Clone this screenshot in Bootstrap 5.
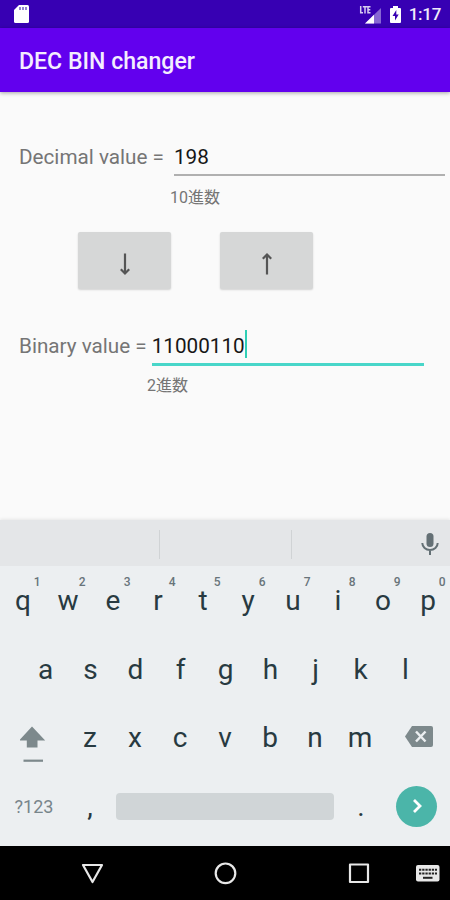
<!DOCTYPE html>
<html lang="en">
<head>
<meta charset="utf-8">
<meta name="viewport" content="width=device-width, initial-scale=1">
<title>DEC BIN changer</title>
<link href="https://cdn.jsdelivr.net/npm/bootstrap@5.3.0/dist/css/bootstrap.min.css" rel="stylesheet">
<style>
body{width:450px;height:900px;overflow:hidden;background:#fafafa;font-family:Roboto,"Noto Sans CJK JP",sans-serif;color:#757575}
svg{display:block;flex:none}
.status{height:28px;background:#3700b3;padding:0 9px 0 14px;color:#f0ebfa;font-size:17px;font-weight:500;line-height:30px;letter-spacing:-.3px}
.appbar{height:64px;background:#6200ee;padding-left:19px;font-size:23.1px;font-weight:500;line-height:67px;color:#f4edfe;box-shadow:0 1px 4px rgba(0,0,0,.35)}
.main{height:428px;padding-top:48px}
.field-row{height:36px;padding-left:19px;font-size:20.7px;line-height:35px;white-space:pre}
.entry{color:#161616;height:36px}
.dec{width:271px;margin-left:10px;border-bottom:2px solid #b0b0b0}
.bin{width:272px;margin-left:5px;height:37px;border-bottom:3px solid #48d6c9}
.caret{width:2px;height:28px;background:#2fcfb6;margin-top:1px}
.hint{font-size:16px;line-height:22px;height:22px}
.hint-dec{margin:11px 0 0 170px}
.hint-bin{margin:10px 0 0 147px}
.pushers{gap:49px;margin:23px 0 40px 78px}
.pusher{width:93px;height:57px;background:#d6d7d7;border:0;border-radius:2px;box-shadow:0 1px 2px rgba(0,0,0,.16);padding:7px 0 0}
.suggest{height:46px;background:#e4e6e8;box-shadow:0 -1px 3px rgba(0,0,0,.08);padding:2px 11px 0 159px}
.divider{width:1px;height:29px;background:#d0d3d5}
.divider-next{margin-left:131px}
.board{height:280px;background:#eceff1;color:#283a41}
.keys{height:68.6px}
.key{width:45px;height:68.6px;text-align:center;font-size:28px;line-height:70.4px;padding-left:1px;flex:none}
.digit{font-size:12px;line-height:12px;right:4.500px;top:10px;color:#68747a;font-weight:500}
.symbols{width:67px;text-align:center;font-size:18px;line-height:71px;color:#78858b;padding-left:1px}
.space{width:218px;height:27px;background:#d0d5d7;border-radius:4px;margin:0 4px}
.enter{width:41px;height:41px;background:#4bb5a9;margin-left:13px}
.backspace{margin-left:23px}
.system{height:54px;background:#000}
</style>
<script src="https://cdn.jsdelivr.net/npm/bootstrap@5.3.0/dist/js/bootstrap.bundle.min.js"></script>
</head>
<body class="d-flex flex-column">
<div class="status d-flex align-items-center flex-shrink-0">
  <svg width="15" height="18" viewBox="0 0 15 18"><path d="M5 0h8.500a1.500 1.500 0 0 1 1.500 1.500v15a1.500 1.500 0 0 1-1.500 1.500h-12A1.500 1.500 0 0 1 0 16.500V5z" fill="#fff"/><path d="M6 2v3M9 2v3M12 2v3" stroke="#725ac3" stroke-width="1.500"/></svg>
  <svg class="ms-auto" width="23" height="19" viewBox="0 0 23 19"><path d="M22 3v15.500H6z" fill="#8767d3"/><path d="M15 9.800v8.700H6z" fill="#fff"/><path d="M1.700 1v6.800H4M3.800 1.700h4.400M6 1.700V8.500M11.500 1.700H9v6.100h2.500M9 4.700h2.300" fill="none" stroke="#d7ccf0" stroke-width="1.500"/></svg>
  <svg class="ms-2" width="11" height="17" viewBox="0 0 11 17"><path d="M3 0h5v2h2a1 1 0 0 1 1 1v13a1 1 0 0 1-1 1H1a1 1 0 0 1-1-1V3a1 1 0 0 1 1-1h2z" fill="#fff"/><path d="M6.300 4L2.500 10h2.500v4.500L8.700 8.500H6.300z" fill="#3700b3"/></svg>
  <span class="ms-2">1:17</span>
</div>
<header class="appbar flex-shrink-0 position-relative">DEC BIN changer</header>
<main class="main flex-shrink-0">
  <div class="field-row d-flex"><span>Decimal value =</span><div class="entry dec">198</div></div>
  <div class="hint hint-dec">10進数</div>
  <div class="pushers d-flex">
    <button class="pusher btn d-flex justify-content-center align-items-center" aria-label="Decimal to binary"><svg width="12" height="24" viewBox="0 0 12 24"><path d="M6 1.500v20M1.800 17.300L6 21.500l4.200-4.200" fill="none" stroke="#555" stroke-width="2.200"/></svg></button>
    <button class="pusher btn d-flex justify-content-center align-items-center" aria-label="Binary to decimal"><svg width="12" height="24" viewBox="0 0 12 24"><path d="M6 22.500V2.500M1.800 6.700L6 2.500l4.200 4.200" fill="none" stroke="#555" stroke-width="2.200"/></svg></button>
  </div>
  <div class="field-row d-flex"><span>Binary value =</span><div class="entry bin d-flex"><span>11000110</span><span class="caret"></span></div></div>
  <div class="hint hint-bin">2進数</div>
</main>
<div class="suggest d-flex align-items-center flex-shrink-0">
  <div class="divider"></div><div class="divider divider-next"></div>
  <svg class="ms-auto" width="18" height="22" viewBox="0 0 18 22"><rect x="5.500" y="0" width="7" height="14" rx="3.500" fill="#647075"/><path d="M1.300 10a7.700 7 0 0 0 15.400 0M9 17V22" fill="none" stroke="#647075" stroke-width="2"/></svg>
</div>
<section class="board flex-shrink-0">
  <div class="keys d-flex">
    <div class="key position-relative">q<span class="digit position-absolute">1</span></div><div class="key position-relative">w<span class="digit position-absolute">2</span></div><div class="key position-relative">e<span class="digit position-absolute">3</span></div><div class="key position-relative">r<span class="digit position-absolute">4</span></div><div class="key position-relative">t<span class="digit position-absolute">5</span></div><div class="key position-relative">y<span class="digit position-absolute">6</span></div><div class="key position-relative">u<span class="digit position-absolute">7</span></div><div class="key position-relative">i<span class="digit position-absolute">8</span></div><div class="key position-relative">o<span class="digit position-absolute">9</span></div><div class="key position-relative">p<span class="digit position-absolute">0</span></div>
  </div>
  <div class="keys d-flex justify-content-center">
    <div class="key">a</div><div class="key">s</div><div class="key">d</div><div class="key">f</div><div class="key">g</div><div class="key">h</div><div class="key">j</div><div class="key">k</div><div class="key">l</div>
  </div>
  <div class="keys d-flex align-items-center">
    <div class="symbols d-flex justify-content-center"><svg width="28" height="56" viewBox="0 0 28 56"><path d="M12 17.500L25.200 31.500H17.500v7H6.800v-7H-1z" fill="#7d898c"/><path d="M3.500 51.700h19.500" stroke="#7d898c" stroke-width="2.200"/></svg></div>
    <div class="key">z</div><div class="key">x</div><div class="key">c</div><div class="key">v</div><div class="key">b</div><div class="key">n</div><div class="key">m</div>
    <svg class="backspace" width="28" height="22" viewBox="0 0 28 22"><path d="M7 0h19a2 2 0 0 1 2 2v17a2 2 0 0 1-2 2H7L0 10.500z" fill="#7d898c"/><path d="M11 5.500l9.500 10M20.500 5.500L11 15.500" stroke="#eceff1" stroke-width="2.500"/></svg>
  </div>
  <div class="keys d-flex align-items-center">
    <div class="symbols">?123</div><div class="key">,</div><div class="space"></div><div class="key">.</div>
    <div class="enter rounded-circle d-flex justify-content-center align-items-center"><svg width="10" height="16" viewBox="0 0 10 16"><path d="M2 2l6 6-6 6" fill="none" stroke="#fff" stroke-width="2.800"/></svg></div>
  </div>
</section>
<nav class="system d-flex align-items-center flex-shrink-0">
  <svg class="w-100" height="54" viewBox="0 0 450 54"><g fill="none" stroke="#e8e8e8" stroke-width="2.200" stroke-linejoin="round"><path d="M83 19h19l-9.500 17z"/><circle cx="225.500" cy="27.300" r="9.800"/><path d="M350 18.500h18v17.500h-18z"/></g><rect x="416" y="19" width="23.500" height="16.500" rx="2" fill="#e8e8e8"/><path d="M419 23.800h18M419 27.500h18" stroke="#222" stroke-width="2" stroke-dasharray="2.300 .9"/><path d="M423 31.800h9.500" stroke="#222" stroke-width="2"/></svg>
</nav>
</body>
</html>
